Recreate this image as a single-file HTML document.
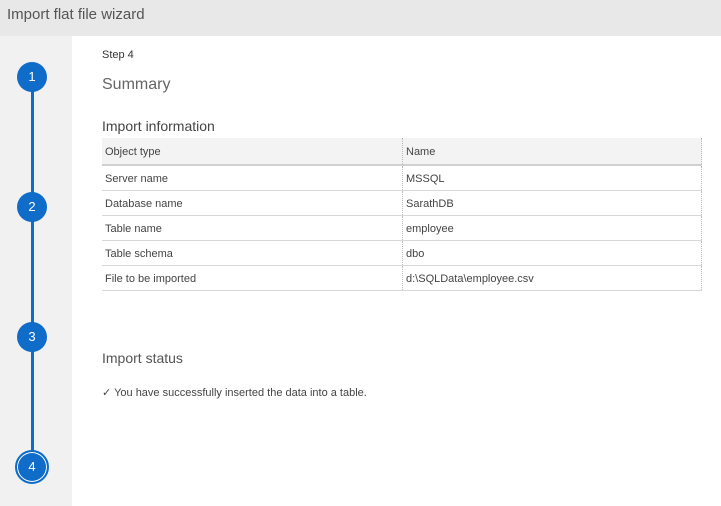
<!DOCTYPE html>
<html><head><style>
body{margin:0;width:721px;height:506px;position:relative;font-family:"Segoe UI","Liberation Sans",sans-serif;background:#fff;overflow:hidden}
.hdr{position:absolute;left:0;top:0;width:721px;height:36px;background:#e8e8e8;color:#555;font-size:15px;line-height:30px;padding-left:7px;box-sizing:border-box}
.side{position:absolute;left:0;top:36px;width:72px;height:470px;background:#f1f1f1}
.line{position:absolute;left:31px;top:77px;width:3px;height:390px;background:#0f6cc8}
.c{position:absolute;width:30px;height:30px;border-radius:50%;background:#0f6cc8;color:#fff;font-size:13px;text-align:center;line-height:30px}
.t{position:absolute;color:#333}
table{position:absolute;left:102px;top:138px;width:600px;border-collapse:collapse;font-size:11px;color:#444}
td{height:23px;padding:1px 0 0 3px;border-bottom:1px solid #d8d8d8}
td+td{border-left:1px dotted #bbb;border-right:1px dotted #bbb}
tr.h td{background:#f3f3f3;height:25px;border-bottom:2px solid #d0d0d0}
</style></head><body>
<div class="hdr">Import flat file wizard</div>
<div class="side"></div>
<div class="line"></div>
<div class="c" style="left:17px;top:62px">1</div>
<div class="c" style="left:17px;top:192px">2</div>
<div class="c" style="left:17px;top:322px">3</div>
<div class="c" style="left:15px;top:450px;width:30px;height:30px;border:2px solid #0f6cc8;box-shadow:inset 0 0 0 1px #fff;line-height:30px">4</div>
<div class="t" style="left:102px;top:49px;font-size:11px">Step 4</div>
<div class="t" style="left:102px;top:76px;font-size:16px;color:#666">Summary</div>
<div class="t" style="left:102px;top:118px;font-size:14px;color:#444">Import information</div>
<table>
<tr class="h"><td style="width:297px">Object type</td><td>Name</td></tr>
<tr><td>Server name</td><td>MSSQL</td></tr>
<tr><td>Database name</td><td>SarathDB</td></tr>
<tr><td>Table name</td><td>employee</td></tr>
<tr><td>Table schema</td><td>dbo</td></tr>
<tr><td>File to be imported</td><td>d:\SQLData\employee.csv</td></tr>
</table>
<div class="t" style="left:102px;top:350px;font-size:14px;color:#555">Import status</div>
<div class="t" style="left:102px;top:386px;font-size:11px;color:#444">✓ You have successfully inserted the data into a table.</div>
</body></html>
